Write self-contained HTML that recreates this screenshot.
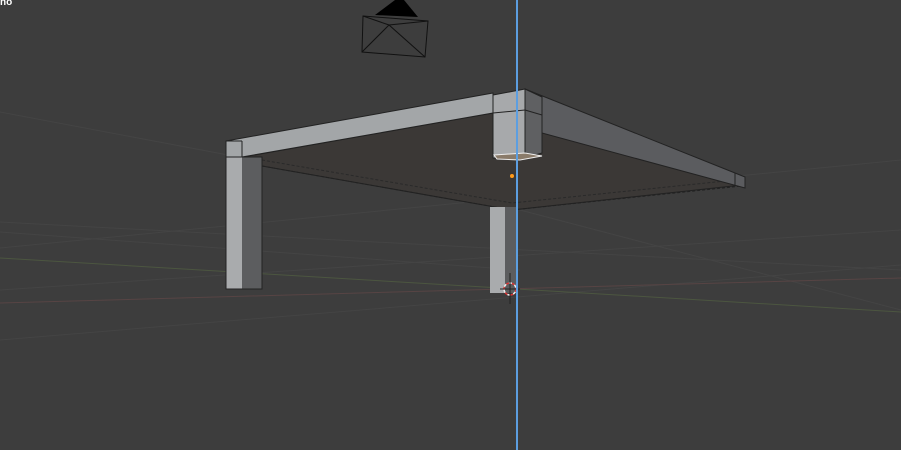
<!DOCTYPE html>
<html><head><style>
html,body{margin:0;padding:0;background:#3d3d3d;width:901px;height:450px;overflow:hidden}
svg{display:block}
.t{position:absolute;left:0;top:-3px;color:#fff;font:bold 10px "Liberation Sans",sans-serif}
</style></head><body>
<div class="t">ho</div>
<svg width="901" height="450" viewBox="0 0 901 450" xmlns="http://www.w3.org/2000/svg">
<rect width="901" height="450" fill="#3d3d3d"/>
<g stroke="#444" stroke-width="1" fill="none">
<line x1="0" y1="112" x2="520" y2="210"/>
<line x1="0" y1="222" x2="901" y2="270"/>
<line x1="0" y1="232" x2="520" y2="270"/>
<line x1="0" y1="248" x2="901" y2="160"/>
<line x1="0" y1="290" x2="901" y2="230"/>
<line x1="520" y1="210" x2="901" y2="310"/>
<line x1="0" y1="340" x2="901" y2="265"/>
</g>
<line x1="0" y1="258" x2="901" y2="312" stroke="#4c5640" stroke-width="1"/>
<line x1="0" y1="303" x2="901" y2="278" stroke="#574444" stroke-width="1"/>
<polygon points="243,157 493,113 742,185 512,210 262,166" fill="#3b3836" stroke="#222" stroke-width="1"/>
<polyline points="262,166 512,210 742,186" fill="none" stroke="#222" stroke-dasharray="3,2"/>
<polyline points="262,160 512,203 735,180" fill="none" stroke="#2a2a2a" stroke-dasharray="3,2"/>
<rect x="226" y="157" width="16" height="132" fill="#a9abad"/>
<rect x="242" y="157" width="20" height="132" fill="#5c5d5f"/>
<rect x="226" y="157" width="36" height="132" fill="none" stroke="#222" stroke-width="1"/>
<rect x="490" y="207" width="15" height="86" fill="#a9abad"/>
<rect x="505" y="207" width="12" height="86" fill="#5c5d5f"/>
<polygon points="226,141 493,93 493,113 242,157 226,157" fill="#a3a6a8" stroke="#222"/>
<line x1="242" y1="141" x2="242" y2="157" stroke="#222"/>
<line x1="226" y1="141" x2="242" y2="141" stroke="#222"/>
<polygon points="525,89 745,177 745,188 542,133 542,97" fill="#5b5c5f" stroke="#222"/>
<line x1="735" y1="173" x2="735" y2="186" stroke="#222"/>
<polygon points="493,95 525,89 525,158 493,158" fill="#a7a9ab" stroke="#222"/>
<polygon points="525,89 542,97 542,153 525,158" fill="#5f6062" stroke="#222"/>
<line x1="493" y1="113" x2="525" y2="110" stroke="#222"/>
<line x1="525" y1="110" x2="542" y2="115" stroke="#222"/>
<polygon points="494,155 525,153 542,156 520,160 497,159" fill="#8a7b6a" stroke="#eee" stroke-width="1"/>
<circle cx="512" cy="176" r="2" fill="#ff9a1a"/>
<polygon points="375,15 395,0 404,0 418,17" fill="#000"/>
<polygon points="363,16 428,21 425,57 362,52" fill="none" stroke="#111" stroke-width="1"/>
<polyline points="363,16 389,25 425,57" fill="none" stroke="#111"/>
<polyline points="362,52 389,25 428,21" fill="none" stroke="#111"/>
<circle cx="510" cy="289" r="6" fill="none" stroke="#d33" stroke-width="1.5" stroke-dasharray="3,3"/>
<circle cx="510" cy="289" r="6" fill="none" stroke="#eee" stroke-width="1.5" stroke-dasharray="3,3" stroke-dashoffset="3"/>
<line x1="510" y1="273" x2="510" y2="304" stroke="#222"/>
<line x1="500" y1="289" x2="520" y2="289" stroke="#222"/>
<rect x="516" y="0" width="2" height="450" fill="#5c9ee0"/>
</svg>
</body></html>
